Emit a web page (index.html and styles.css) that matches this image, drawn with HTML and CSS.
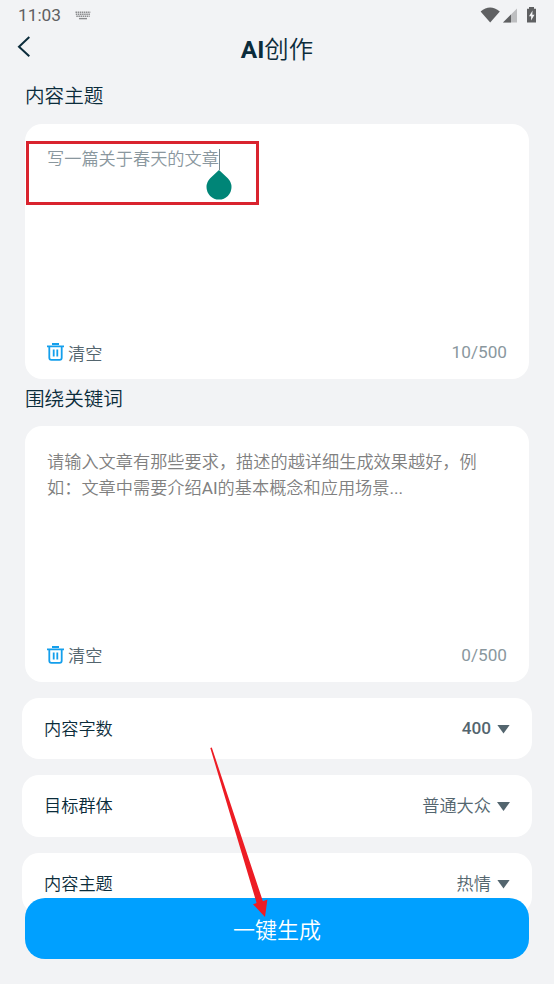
FILE: index.html
```html
<!DOCTYPE html>
<html lang="zh-CN">
<head>
<meta charset="utf-8">
<title>AI创作</title>
<link rel="stylesheet" href="styles.css">
</head>
<body>
<div class="screen">
  <header class="status">
    <span class="clock">11:03</span>
    <svg class="keyboard" width="16" height="10" viewBox="0 0 16 10"><path d="M.5 1.2H15.5M.8 3.2H15.2M1.3 5.2H14.7" fill="none" stroke="#8b8c8e" stroke-width="1.4" stroke-dasharray="1.5 .6"/><path d="M4 7.6H12" fill="none" stroke="#8b8c8e" stroke-width="1.4"/></svg>
    <svg class="signals" width="58" height="18" viewBox="0 0 58 18">
      <path d="M.6 4.5Q10-3.5 19.8 4.5L10.2 15.5Z" fill="#5f6062"/>
      <path d="M37 1.5V15.5H23Z" fill="#bdbec0"/>
      <path d="M31 7.5V15.5H23Z" fill="#5f6062"/>
      <path d="M49 0H54V1.8H56V15.5H47V1.8H49Z" fill="#5f6062"/>
      <path d="M52.6 3.5L49 9.3H51.1V13.5L54.5 7.8H52.3Z" fill="#f2f3f5"/>
    </svg>
  </header>
  <nav class="nav">
    <svg class="back" width="14" height="22" viewBox="0 0 14 22"><path d="M12.3 1L2 10.7L12.3 20.3" fill="none" stroke="#0b2c3b" stroke-width="2"/></svg>
    <h1 class="title"><b>AI</b>创作</h1>
  </nav>
  <main class="content">
    <h2 class="heading">内容主题</h2>
    <section class="card">
      <p class="entry">写一篇关于春天的文章<span class="caret"><svg class="handle" width="26" height="30" viewBox="0 0 26 30"><path d="M13 0L21.8 8.2A12.5 12.5 0 1 1 4.2 8.2Z" fill="#008577"/></svg></span></p>
      <footer class="tools">
        <svg class="trash" width="17" height="18" viewBox="0 0 17 18"><path d="M0 3.4H17M5 1H12M2.3 3.4V14.7Q2.3 16.8 4.4 16.8H12.6Q14.7 16.8 14.7 14.7V3.4M6.7 6.5V13.5M10.3 6.5V13.5" fill="none" stroke="#149fec" stroke-width="1.8"/></svg>
        <span class="clear">清空</span><span class="count">10/500</span>
      </footer>
      <div class="highlight"></div>
    </section>
    <h2 class="heading second">围绕关键词</h2>
    <section class="card">
      <p class="entry hint">请输入文章有那些要求，描述的越详细生成效果越好，例<br>如：文章中需要介绍<span class="latin">AI</span>的基本概念和应用场景<span class="latin">...</span></p>
      <footer class="tools">
        <svg class="trash" width="17" height="18" viewBox="0 0 17 18"><path d="M0 3.4H17M5 1H12M2.3 3.4V14.7Q2.3 16.8 4.4 16.8H12.6Q14.7 16.8 14.7 14.7V3.4M6.7 6.5V13.5M10.3 6.5V13.5" fill="none" stroke="#149fec" stroke-width="1.8"/></svg>
        <span class="clear">清空</span><span class="count">0/500</span>
      </footer>
    </section>
    <div class="options">
      <div class="option"><span>内容字数</span><span class="value number">400</span><i class="arrow"></i></div>
      <div class="option"><span>目标群体</span><span class="value">普通大众</span><i class="arrow"></i></div>
      <div class="option"><span>内容主题</span><span class="value">热情</span><i class="arrow"></i></div>
    </div>
  </main>
  <button class="generate">一键生成</button>
  <svg class="pointer" width="60" height="174" viewBox="0 0 60 174"><path d="M.3 1L1.8 .4L52.9 154.2L57.4 152.6L55 170L43 157.3L46.6 156Z" fill="#ed1c24"/></svg>
</div>
</body>
</html>
```
FILE: styles.css
```css
* { box-sizing: border-box; }
body {
  margin: 0;
  background: #f2f3f5;
  color: #0b2c3b;
  font-family: Roboto, "Noto Sans CJK SC", sans-serif;
  font-size: 17.2px;
  font-weight: 350;
}
.screen { position: relative; height: 984px; overflow: hidden; }
.status { display: flex; height: 30px; padding: 6px 17px 0 18px; color: #5f6062; }
.clock { font-size: 17.3px; line-height: 19px; font-weight: 400; }
.keyboard { margin: 5px 0 0 14px; }
.signals { width: 58px; margin: 1px -1px 0 auto; }
.nav { display: grid; grid-template-columns: 40px 1fr 40px; height: 46px; }
.back { margin: 6px 0 0 17px; }
.title { margin: 0; text-align: center; font-size: 24.4px; line-height: 39px; font-weight: 350; }
.title b { font-weight: 700; }
.content { padding: 0 25px; }
.heading { margin: 0; height: 48px; font-size: 19.6px; line-height: 42px; font-weight: 350; }
.second { height: 47px; line-height: 41px; }
.card {
  position: relative;
  display: flex;
  flex-direction: column;
  justify-content: space-between;
  height: 255.4px;
  padding: 23px 22px 14px;
  border-radius: 17px;
  background: #fff;
}
.entry { margin: 0; color: #8a979e; line-height: 25.5px; }
.hint { padding-top: 1px; color: #808080; }
.latin { font-weight: 400; }
.caret { position: relative; display: inline-block; width: 1px; height: 21px; background: #77868d; vertical-align: -5px; }
.handle { position: absolute; left: -13px; top: 21px; }
.highlight { position: absolute; left: 1px; top: 17px; width: 233px; height: 64px; border: 3px solid #d9232e; }
.tools { display: flex; align-items: center; height: 26px; }
.clear { margin-left: 4px; color: #53656e; }
.count { margin-left: auto; color: #8a979e; font-weight: 400; }
.options { display: grid; gap: 16px; margin: 16px -3px 0; }
.option { display: flex; align-items: center; height: 61.5px; padding: 0 22px 3px; border-radius: 17px; background: #fff; }
.value { margin-left: auto; color: #53656e; }
.number { font-weight: 500; padding-top: 1px; }
.arrow { width: 13px; height: 9px; margin: 4px 0 0 6px; background: #53656e; clip-path: polygon(0 0, 100% 0, 50% 100%); }
.generate {
  position: absolute;
  left: 25px;
  right: 25px;
  bottom: 25px;
  height: 61px;
  padding: 0 0 2px;
  border: 0;
  border-radius: 20px;
  background: #00a0ff;
  color: #fff;
  font: 350 22px Roboto, "Noto Sans CJK SC", sans-serif;
}
.pointer { position: absolute; left: 210px; top: 747px; }
```
